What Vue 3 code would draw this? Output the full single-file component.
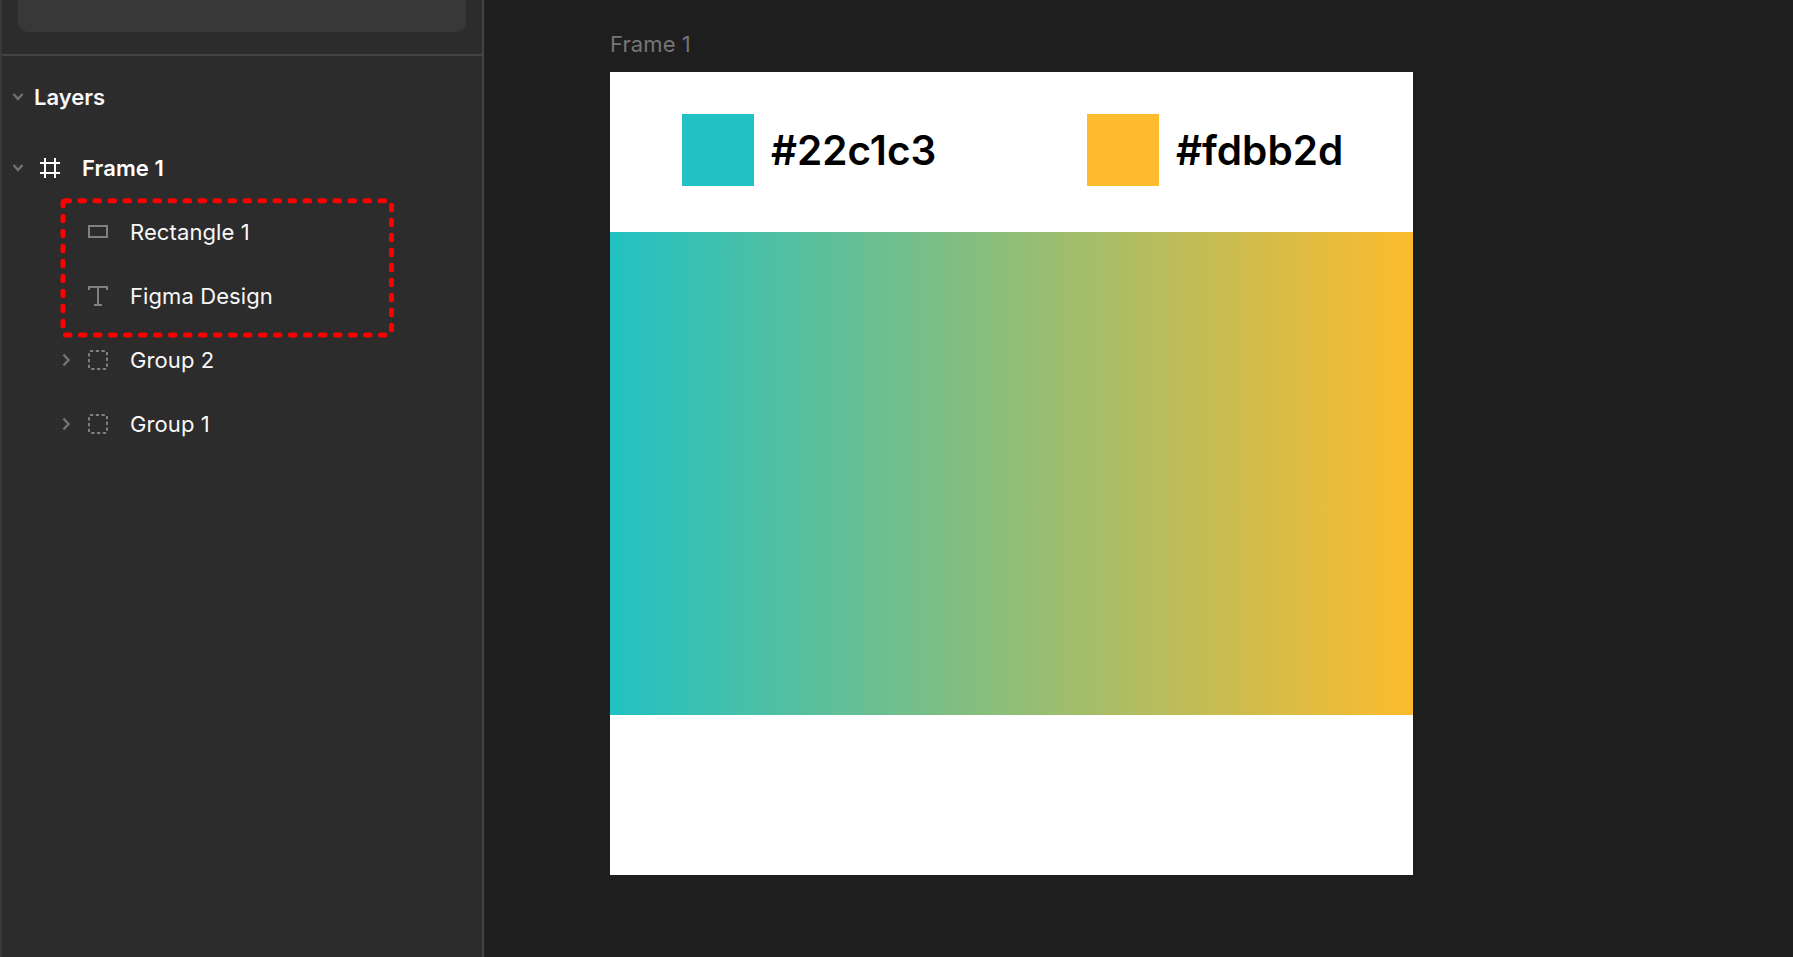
<script setup>
const swatches = [
  { hex: '#22c1c3' },
  { hex: '#fdbb2d' },
]
</script>

<template>
  <div class="app">
    <aside class="panel">
      <div class="top">
        <div class="card"></div>
      </div>
      <section class="layers">
        <div class="head">
          <svg class="chev" viewBox="0 0 12 12"><path d="M1.5 3l4.5 5 4.5-5" /></svg>
          <span>Layers</span>
        </div>
        <div class="tree">
          <div class="row frame-row">
            <svg class="chev" viewBox="0 0 12 12"><path d="M1.5 3l4.5 5 4.5-5" /></svg>
            <svg class="ico frame-ico" viewBox="0 0 20 20"><path d="M5 0v20M15 0v20M0 5h20M0 15h20" /></svg>
            <span>Frame 1</span>
          </div>
          <div class="child">
            <div class="row">
              <svg class="ico" viewBox="0 0 20 20"><rect x="1" y="4" width="18" height="11" /></svg>
              <span>Rectangle 1</span>
            </div>
            <div class="row">
              <svg class="ico" viewBox="0 0 20 20"><path d="M1 4V1h18v3M10 1v18M6 19h8" /></svg>
              <span>Figma Design</span>
            </div>
            <svg class="mark" viewBox="0 0 336 142"><rect x="3" y="3.7" width="328.5" height="134.3" rx="2" /></svg>
          </div>
          <div class="row group">
            <svg class="side" viewBox="0 0 12 12"><path d="M3.5.5l5 5.5-5 5.5" /></svg>
            <svg class="ico" viewBox="0 0 20 20"><rect class="dash" x="1" y="1" width="18" height="18" rx="1" /></svg>
            <span>Group 2</span>
          </div>
          <div class="row group">
            <svg class="side" viewBox="0 0 12 12"><path d="M3.5.5l5 5.5-5 5.5" /></svg>
            <svg class="ico" viewBox="0 0 20 20"><rect class="dash" x="1" y="1" width="18" height="18" rx="1" /></svg>
            <span>Group 1</span>
          </div>
        </div>
      </section>
    </aside>
    <main class="canvas">
      <div class="label">Frame 1</div>
      <div class="frame">
        <div class="swatches">
          <div v-for="s in swatches" :key="s.hex" class="swatch">
            <i :style="{ background: s.hex }"></i>
            <b>{{ s.hex }}</b>
          </div>
        </div>
        <div class="gradient"></div>
      </div>
    </main>
  </div>
</template>

<style>
html, body { margin: 0; background: #1e1e1e; overflow: hidden; }
</style>

<style scoped>
.app {
  display: flex;
  width: 1793px;
  height: 957px;
  font-family: Inter, "Noto Sans", sans-serif;
  overflow: hidden;
}
.panel {
  box-sizing: border-box;
  width: 484px;
  flex: none;
  background: #2c2c2c;
  border-left: 2px solid #3a3a3a;
  border-right: 2px solid #444;
}
.top {
  box-sizing: border-box;
  height: 56px;
  padding: 0 16px;
  border-bottom: 2px solid #444;
}
.card {
  height: 32px;
  background: #383838;
  border-radius: 0 0 10px 10px;
}
.layers { padding-top: 11px; }
.head {
  display: flex;
  align-items: center;
  height: 60px;
  padding-left: 10px;
  gap: 10px;
  color: #f8f8f8;
  font-size: 22px;
  font-weight: 600;
}
.tree { padding-top: 9px; }
.row {
  display: flex;
  align-items: center;
  height: 64px;
  color: #f8f8f8;
  font-size: 22px;
  letter-spacing: 0.1px;
}
.frame-row { padding-left: 10px; font-weight: 600; color: #fff; }
.frame-row .frame-ico { margin: 0 22px 0 16px; }
.frame-row .frame-ico path { stroke: #fff; }
.child { position: relative; padding-left: 86px; }
.child .row .ico { margin-right: 22px; }
.mark {
  position: absolute;
  left: 58px;
  top: -3px;
  width: 336px;
  height: 142px;
  pointer-events: none;
}
.mark rect {
  fill: none;
  stroke: #f00;
  stroke-width: 5;
  stroke-dasharray: 4.5 10.5;
  stroke-linecap: round;
}
.group { padding-left: 58px; }
.group .ico { margin-right: 22px; }
.side { width: 12px; height: 12px; margin-right: 16px; flex: none; }
.side path, .chev path { fill: none; stroke: #727272; stroke-width: 2.4; }
.chev { width: 12px; height: 12px; flex: none; }
.ico { width: 20px; height: 20px; flex: none; }
.ico path, .ico rect { fill: none; stroke: #808080; stroke-width: 2; }
.ico .dash { stroke-dasharray: 3.2 2.6; }
.canvas {
  flex: 1;
  padding: 27px 0 0 126px;
  background: #1e1e1e;
}
.label {
  height: 45px;
  line-height: 35px;
  color: #757575;
  font-size: 22px;
  letter-spacing: 0.1px;
}
.frame {
  width: 803px;
  height: 803px;
  background: #fff;
}
.swatches {
  display: grid;
  grid-template-columns: 405px auto;
  box-sizing: border-box;
  height: 160px;
  padding: 42px 0 0 72px;
}
.swatch {
  display: flex;
  align-items: center;
  gap: 17px;
  height: 72px;
}
.swatch i {
  display: block;
  width: 72px;
  height: 72px;
}
.swatch b {
  color: #000;
  font-size: 40.5px;
  font-weight: 600;
}
.gradient {
  height: 483px;
  background: linear-gradient(90deg, #22c1c3, #fdbb2d);
}
</style>
